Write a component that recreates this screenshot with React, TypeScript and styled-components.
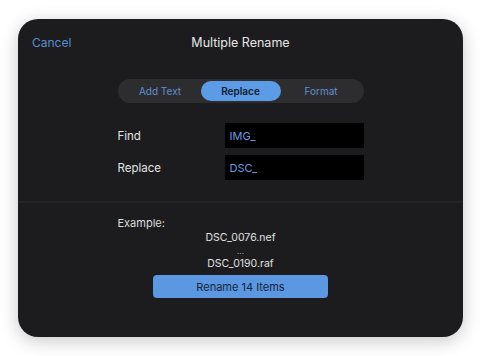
import * as React from 'react';
import styled, { createGlobalStyle } from 'styled-components';

const GlobalStyle = createGlobalStyle`
  html, body {
    margin: 0;
    padding: 0;
    background: #ffffff;
  }
  body {
    font-family: Inter, "Noto Sans", "Liberation Sans", sans-serif;
    -webkit-font-smoothing: antialiased;
  }
`;

const Page = styled.div`
  width: 480px;
  height: 356px;
  box-sizing: border-box;
  padding: 19px 17px 19px 18px;
`;

const Card = styled.div`
  width: 445px;
  height: 318px;
  background: #1c1c1e;
  border-radius: 20px;
  box-shadow: 0 4px 18px rgba(0, 0, 0, 0.22);
  display: flex;
  flex-direction: column;
  overflow: hidden;
`;

const Header = styled.div`
  height: 46px;
  display: grid;
  grid-template-columns: 1fr auto 1fr;
  align-items: center;
  padding: 0 14px;
`;

const CancelButton = styled.span`
  color: #5a8ccf;
  font-size: 12px;
  justify-self: start;
`;

const Title = styled.span`
  color: #e6e6e6;
  font-size: 12.5px;
`;

const Segmented = styled.div`
  align-self: center;
  margin-top: 14px;
  width: 246px;
  height: 24px;
  box-sizing: border-box;
  padding: 2px;
  border-radius: 12px;
  background: #2d2d2f;
  display: grid;
  grid-template-columns: 1fr 80px 1fr;
  align-items: stretch;
`;

type SegmentProps = { $active?: boolean };

const Segment = styled.div<SegmentProps>`
  display: flex;
  align-items: center;
  justify-content: center;
  border-radius: 10px;
  font-size: 10px;
  font-weight: ${({ $active }) => ($active ? 600 : 400)};
  color: ${({ $active }) => ($active ? '#0f1a2c' : '#5f8fd0')};
  background: ${({ $active }) => ($active ? '#5c9be6' : 'transparent')};
`;

const Form = styled.div`
  align-self: center;
  margin-top: 20px;
  width: 246px;
  display: grid;
  grid-template-columns: 107px 139px;
  row-gap: 7px;
  align-items: center;
`;

const Label = styled.span`
  color: #e4e4e4;
  font-size: 11.5px;
`;

const Field = styled.div`
  height: 25px;
  background: #000000;
  color: #6a9ae0;
  font-size: 11px;
  display: flex;
  align-items: center;
  padding-left: 5px;
`;

const Divider = styled.div`
  margin-top: 21px;
  height: 2px;
  background: #252527;
`;

const Example = styled.div`
  align-self: center;
  width: 246px;
  margin-top: 12px;
  display: flex;
  flex-direction: column;
`;

const ExampleLabel = styled.span`
  color: #dcdcdc;
  font-size: 11px;
  line-height: 16px;
`;

const FileName = styled.span`
  color: #e0e0e0;
  font-size: 10.5px;
  line-height: 13.5px;
  text-align: center;
`;

const Ellipsis = styled.span`
  color: #bdbdbd;
  font-size: 8px;
  line-height: 12px;
  text-align: center;
`;

const RenameButton = styled.button`
  align-self: center;
  margin-top: 5px;
  width: 175px;
  height: 23px;
  border: none;
  border-radius: 4px;
  background: #5c97e2;
  color: #13233a;
  font-family: inherit;
  font-size: 11px;
  padding: 0;
`;

export default function App() {
  return (
    <Page>
      <GlobalStyle />
      <Card>
        <Header>
          <CancelButton>Cancel</CancelButton>
          <Title>Multiple Rename</Title>
          <span />
        </Header>
        <Segmented>
          <Segment>Add Text</Segment>
          <Segment $active>Replace</Segment>
          <Segment>Format</Segment>
        </Segmented>
        <Form>
          <Label>Find</Label>
          <Field>IMG_</Field>
          <Label>Replace</Label>
          <Field>DSC_</Field>
        </Form>
        <Divider />
        <Example>
          <ExampleLabel>Example:</ExampleLabel>
          <FileName>DSC_0076.nef</FileName>
          <Ellipsis>...</Ellipsis>
          <FileName>DSC_0190.raf</FileName>
        </Example>
        <RenameButton>Rename 14 Items</RenameButton>
      </Card>
    </Page>
  );
}
